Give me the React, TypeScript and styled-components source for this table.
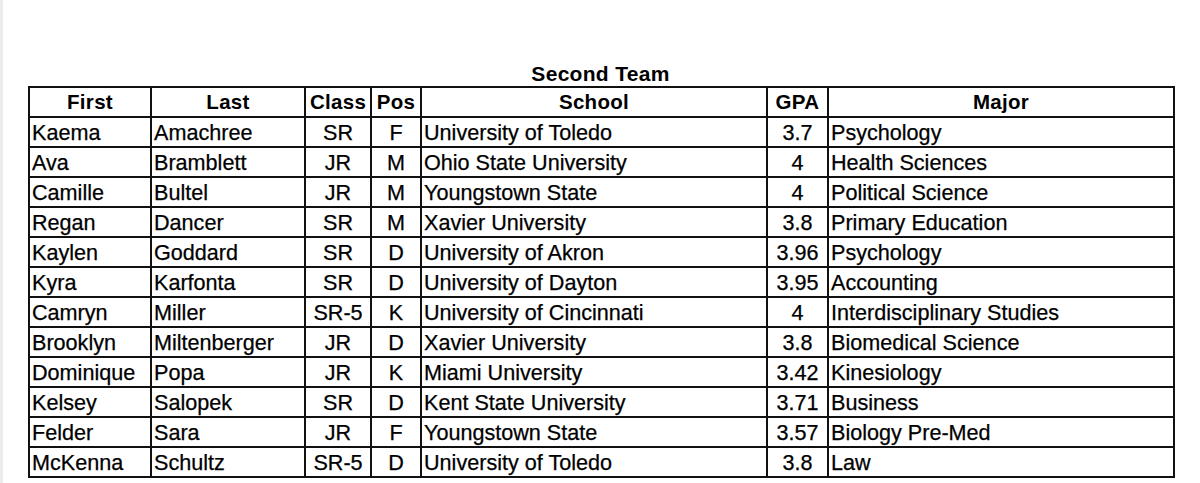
import React from "react";
import styled, { createGlobalStyle } from "styled-components";

const Global = createGlobalStyle`
  html, body {
    margin: 0;
    padding: 0;
    background: #fff;
  }
  body {
    font-family: "Liberation Sans", Arial, sans-serif;
    color: #000;
  }
`;

const Page = styled.div`
  width: 1200px;
  height: 483px;
  box-sizing: border-box;
  border-left: 3px solid #ececec;
  padding: 61px 0 0 25px;
  overflow: hidden;
`;

const Block = styled.div`
  width: 1145px;
  display: flex;
  flex-direction: column;
`;

const Title = styled.div`
  font-size: 21px;
  font-weight: 700;
  letter-spacing: 0.3px;
  text-align: center;
  line-height: 25px;
  height: 25px;
`;

const Sheet = styled.table`
  width: 1145px;
  table-layout: fixed;
  border-collapse: collapse;
  border: 2px solid #111;
`;

const Row = styled.tr`
  height: 30px;
`;

const HeadCell = styled.th`
  border: 2px solid #111;
  padding: 0 2px;
  font-size: 20.5px;
  font-weight: 700;
  letter-spacing: 0.3px;
  text-align: center;
  white-space: nowrap;
  overflow: hidden;
`;

const Cell = styled.td<{ $center?: boolean }>`
  border: 2px solid #111;
  padding: 1px 2px 0;
  font-size: 21.6px;
  line-height: 24px;
  -webkit-text-stroke: 0.25px #000;
  text-align: ${(p) => (p.$center ? "center" : "left")};
  white-space: nowrap;
  overflow: hidden;
`;

const columns = [
  { label: "First", width: 122 },
  { label: "Last", width: 154 },
  { label: "Class", width: 66 },
  { label: "Pos", width: 50 },
  { label: "School", width: 346 },
  { label: "GPA", width: 61 },
  { label: "Major", width: 346 },
];

const players = [
  ["Kaema", "Amachree", "SR", "F", "University of Toledo", "3.7", "Psychology"],
  ["Ava", "Bramblett", "JR", "M", "Ohio State University", "4", "Health Sciences"],
  ["Camille", "Bultel", "JR", "M", "Youngstown State", "4", "Political Science"],
  ["Regan", "Dancer", "SR", "M", "Xavier University", "3.8", "Primary Education"],
  ["Kaylen", "Goddard", "SR", "D", "University of Akron", "3.96", "Psychology"],
  ["Kyra", "Karfonta", "SR", "D", "University of Dayton", "3.95", "Accounting"],
  ["Camryn", "Miller", "SR-5", "K", "University of Cincinnati", "4", "Interdisciplinary Studies"],
  ["Brooklyn", "Miltenberger", "JR", "D", "Xavier University", "3.8", "Biomedical Science"],
  ["Dominique", "Popa", "JR", "K", "Miami University", "3.42", "Kinesiology"],
  ["Kelsey", "Salopek", "SR", "D", "Kent State University", "3.71", "Business"],
  ["Felder", "Sara", "JR", "F", "Youngstown State", "3.57", "Biology Pre-Med"],
  ["McKenna", "Schultz", "SR-5", "D", "University of Toledo", "3.8", "Law"],
];

// class, pos and gpa sit centred in their cells
const centred = new Set([2, 3, 5]);

export default function App() {
  return (
    <>
      <Global />
      <Page>
        <Block>
          <Title>Second Team</Title>
          <Sheet>
            <colgroup>
              {columns.map((c) => (
                <col key={c.label} style={{ width: c.width }} />
              ))}
            </colgroup>
            <thead>
              <Row>
                {columns.map((c) => (
                  <HeadCell key={c.label}>{c.label}</HeadCell>
                ))}
              </Row>
            </thead>
            <tbody>
              {players.map((p) => (
                <Row key={p[0] + p[1]}>
                  {p.map((v, i) => (
                    <Cell key={i} $center={centred.has(i)}>
                      {v}
                    </Cell>
                  ))}
                </Row>
              ))}
            </tbody>
          </Sheet>
        </Block>
      </Page>
    </>
  );
}
